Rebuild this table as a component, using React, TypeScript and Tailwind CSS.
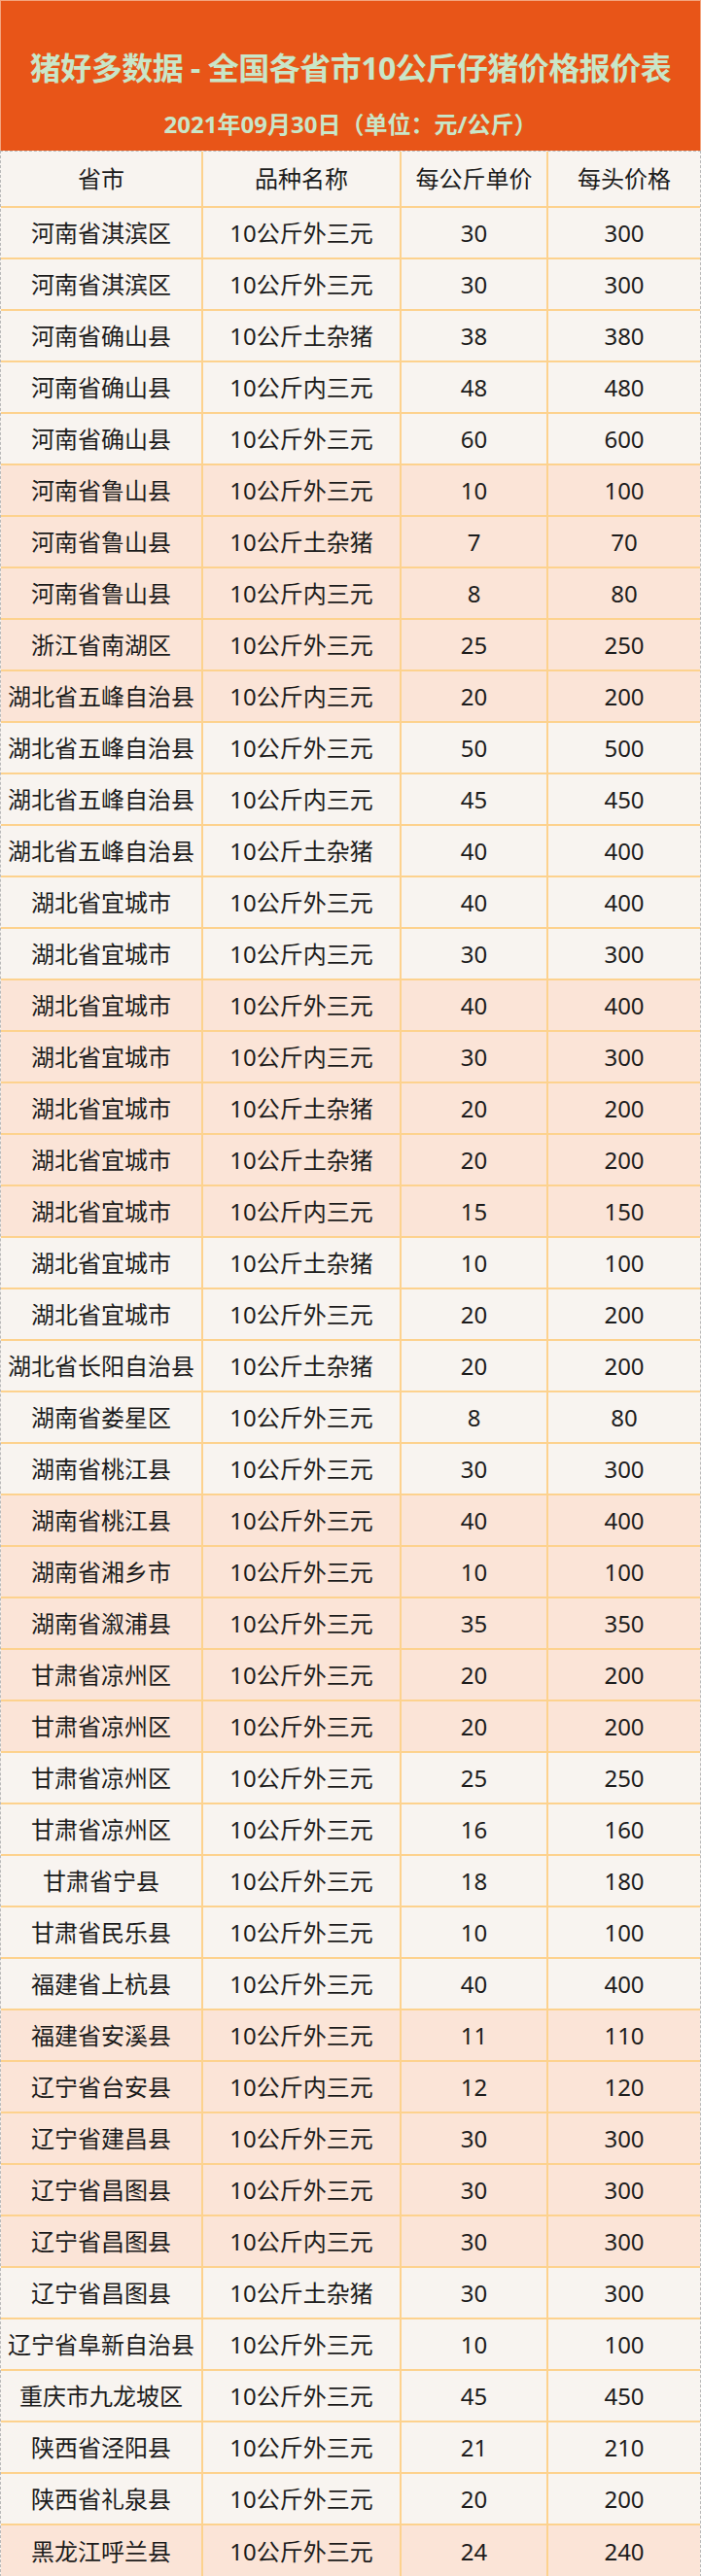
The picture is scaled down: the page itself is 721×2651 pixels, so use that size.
import React from 'react';

type Row = [string, string, number, number];

// 每5行换一次底色
const rows: Row[] = [
  ['河南省淇滨区', '10公斤外三元', 30, 300],
  ['河南省淇滨区', '10公斤外三元', 30, 300],
  ['河南省确山县', '10公斤土杂猪', 38, 380],
  ['河南省确山县', '10公斤内三元', 48, 480],
  ['河南省确山县', '10公斤外三元', 60, 600],
  ['河南省鲁山县', '10公斤外三元', 10, 100],
  ['河南省鲁山县', '10公斤土杂猪', 7, 70],
  ['河南省鲁山县', '10公斤内三元', 8, 80],
  ['浙江省南湖区', '10公斤外三元', 25, 250],
  ['湖北省五峰自治县', '10公斤内三元', 20, 200],
  ['湖北省五峰自治县', '10公斤外三元', 50, 500],
  ['湖北省五峰自治县', '10公斤内三元', 45, 450],
  ['湖北省五峰自治县', '10公斤土杂猪', 40, 400],
  ['湖北省宜城市', '10公斤外三元', 40, 400],
  ['湖北省宜城市', '10公斤内三元', 30, 300],
  ['湖北省宜城市', '10公斤外三元', 40, 400],
  ['湖北省宜城市', '10公斤内三元', 30, 300],
  ['湖北省宜城市', '10公斤土杂猪', 20, 200],
  ['湖北省宜城市', '10公斤土杂猪', 20, 200],
  ['湖北省宜城市', '10公斤内三元', 15, 150],
  ['湖北省宜城市', '10公斤土杂猪', 10, 100],
  ['湖北省宜城市', '10公斤外三元', 20, 200],
  ['湖北省长阳自治县', '10公斤土杂猪', 20, 200],
  ['湖南省娄星区', '10公斤外三元', 8, 80],
  ['湖南省桃江县', '10公斤外三元', 30, 300],
  ['湖南省桃江县', '10公斤外三元', 40, 400],
  ['湖南省湘乡市', '10公斤外三元', 10, 100],
  ['湖南省溆浦县', '10公斤外三元', 35, 350],
  ['甘肃省凉州区', '10公斤外三元', 20, 200],
  ['甘肃省凉州区', '10公斤外三元', 20, 200],
  ['甘肃省凉州区', '10公斤外三元', 25, 250],
  ['甘肃省凉州区', '10公斤外三元', 16, 160],
  ['甘肃省宁县', '10公斤外三元', 18, 180],
  ['甘肃省民乐县', '10公斤外三元', 10, 100],
  ['福建省上杭县', '10公斤外三元', 40, 400],
  ['福建省安溪县', '10公斤外三元', 11, 110],
  ['辽宁省台安县', '10公斤内三元', 12, 120],
  ['辽宁省建昌县', '10公斤外三元', 30, 300],
  ['辽宁省昌图县', '10公斤外三元', 30, 300],
  ['辽宁省昌图县', '10公斤内三元', 30, 300],
  ['辽宁省昌图县', '10公斤土杂猪', 30, 300],
  ['辽宁省阜新自治县', '10公斤外三元', 10, 100],
  ['重庆市九龙坡区', '10公斤外三元', 45, 450],
  ['陕西省泾阳县', '10公斤外三元', 21, 210],
  ['陕西省礼泉县', '10公斤外三元', 20, 200],
  ['黑龙江呼兰县', '10公斤外三元', 24, 240],
];

const font = { fontFamily: '"Noto Sans", "Noto Sans CJK SC", sans-serif' };

function Cells({ cells }: { cells: (string | number)[] }) {
  return (
    <>
      {cells.map((c, i) => (
        <div
          key={i}
          className={`flex items-center justify-center whitespace-nowrap ${i > 0 ? 'border-l-2 border-[#fdd28e]' : ''}`}
        >
          {c}
        </div>
      ))}
    </>
  );
}

export default function App() {
  return (
    <div className="w-[721px] bg-[#f8f4f0] text-[#1c1c1c]" style={font}>
      <div className="h-[155px] bg-[#e85518] border border-b-0 border-[#f3a47e] flex flex-col items-center pt-[49px] text-[#c9e6c8] font-bold">
        <h1 className="text-[32px] leading-[40px] tracking-[-0.5px]">猪好多数据 - 全国各省市10公斤仔猪价格报价表</h1>
        <p className="mt-[22px] text-[24px] leading-[32px]">2021年09月30日（单位：元/公斤）</p>
      </div>

      <div className="border-x border-t border-dashed border-[#b9b9b9] text-[24px]">
        <div className="grid grid-cols-[206px_204px_151px_1fr] h-[56px] bg-[#f8f4f0]">
          <Cells cells={['省市', '品种名称', '每公斤单价', '每头价格']} />
        </div>
        {rows.map((r, i) => {
          const pink = Math.floor(i / 5) % 2 === 1;
          const last = i === rows.length - 1;
          return (
            <div
              key={i}
              className={`grid grid-cols-[206px_204px_151px_1fr] border-t-2 border-[#fdd28e] ${last ? 'h-[55px]' : 'h-[53px]'} ${pink ? 'bg-[#fbe4d7]' : 'bg-[#f8f4f0]'}`}
            >
              <Cells cells={r} />
            </div>
          );
        })}
      </div>
    </div>
  );
}
